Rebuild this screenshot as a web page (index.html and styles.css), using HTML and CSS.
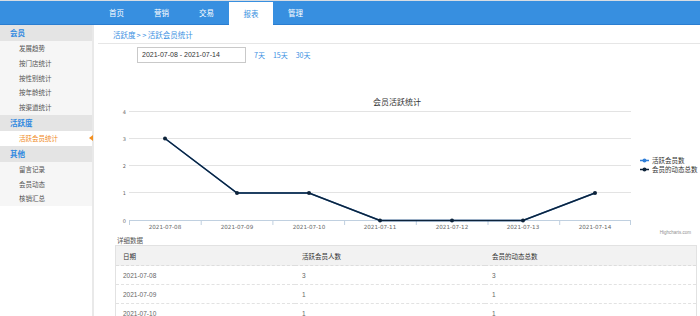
FILE: index.html
```html
<!DOCTYPE html>
<html>
<head>
    <title>会员活跃统计</title>
    <link rel="stylesheet" href="styles.css">
</head>
<body>
    <div class="topbar">
        <ul class="nav">
            <li>首页</li>
            <li>营销</li>
            <li>交易</li>
            <li class="active">报表</li>
            <li>管理</li>
        </ul>
    </div>

    <div class="layout">
        <div class="sidebar">
            <div class="menu">
                <div class="menu-title">会员</div>
                <div class="menu-item">发展趋势</div>
                <div class="menu-item">按门店统计</div>
                <div class="menu-item">按性别统计</div>
                <div class="menu-item">按年龄统计</div>
                <div class="menu-item">按渠道统计</div>
                <div class="menu-title">活跃度</div>
                <div class="menu-item current">活跃会员统计</div>
                <div class="menu-title">其他</div>
                <div class="menu-item">留言记录</div>
                <div class="menu-item">会员动态</div>
                <div class="menu-item">核销汇总</div>
            </div>
        </div>

        <div class="main">
            <div class="crumb">活跃度<span class="sep">&gt;&gt;</span>活跃会员统计</div>

            <div class="filter">
                <div class="date-input">2021-07-08 - 2021-07-14</div>
                <a class="quick">7天</a>
                <a class="quick">15天</a>
                <a class="quick">30天</a>
            </div>

            <svg class="chart" width="605" height="170" viewBox="95 66 605 170">
                <text class="chart-title" x="398" y="105" text-anchor="middle">会员活跃统计</text>

                <!-- 网格线 -->
                <g stroke="#e3e3e3" stroke-width="1">
                    <line x1="130" y1="111.5" x2="632" y2="111.5"/>
                    <line x1="130" y1="138.5" x2="632" y2="138.5"/>
                    <line x1="130" y1="165.5" x2="632" y2="165.5"/>
                    <line x1="130" y1="192.5" x2="632" y2="192.5"/>
                </g>
                <line x1="130" y1="220.5" x2="632" y2="220.5" stroke="#c0d0e0"/>
                <g stroke="#c0d0e0">
                    <line x1="130.5" y1="220" x2="130.5" y2="225"/>
                    <line x1="202.2" y1="220" x2="202.2" y2="225"/>
                    <line x1="273.9" y1="220" x2="273.9" y2="225"/>
                    <line x1="345.6" y1="220" x2="345.6" y2="225"/>
                    <line x1="417.3" y1="220" x2="417.3" y2="225"/>
                    <line x1="489" y1="220" x2="489" y2="225"/>
                    <line x1="560.7" y1="220" x2="560.7" y2="225"/>
                    <line x1="631.5" y1="220" x2="631.5" y2="225"/>
                </g>

                <g class="axis-label" text-anchor="end">
                    <text x="127" y="113.5">4</text>
                    <text x="127" y="140.5">3</text>
                    <text x="127" y="167.5">2</text>
                    <text x="127" y="195">1</text>
                    <text x="127" y="222.5">0</text>
                </g>
                <g class="axis-label date-label" text-anchor="middle">
                    <text x="166" y="228.5">2021-07-08</text>
                    <text x="238" y="228.5">2021-07-09</text>
                    <text x="310" y="228.5">2021-07-10</text>
                    <text x="381" y="228.5">2021-07-11</text>
                    <text x="453" y="228.5">2021-07-12</text>
                    <text x="524" y="228.5">2021-07-13</text>
                    <text x="596" y="228.5">2021-07-14</text>
                </g>

                <!-- 活跃会员数 -->
                <polyline fill="none" stroke="#2f7ed8" stroke-width="1.5"
                    points="166,138.5 238,193 310,193 381,220.5 453,220.5 524,220.5 596,193"/>
                <!-- 会员的动态总数 -->
                <polyline fill="none" stroke="#0d233a" stroke-width="1.5"
                    points="166,138.5 238,193 310,193 381,220.5 453,220.5 524,220.5 596,193"/>
                <g fill="#0d233a">
                    <circle cx="166" cy="138.5" r="2"/>
                    <circle cx="238" cy="193" r="2"/>
                    <circle cx="310" cy="193" r="2"/>
                    <circle cx="381" cy="220.5" r="2"/>
                    <circle cx="453" cy="220.5" r="2"/>
                    <circle cx="524" cy="220.5" r="2"/>
                    <circle cx="596" cy="193" r="2"/>
                </g>

                <!-- 图例 -->
                <line x1="641" y1="160.5" x2="650" y2="160.5" stroke="#2f7ed8" stroke-width="1.5"/>
                <circle cx="645.5" cy="160.5" r="2" fill="#2f7ed8"/>
                <text class="legend" x="653" y="162.5">活跃会员数</text>
                <line x1="641" y1="169.5" x2="650" y2="169.5" stroke="#0d233a" stroke-width="1.5"/>
                <circle cx="645.5" cy="169.5" r="2" fill="#0d233a"/>
                <text class="legend" x="653" y="171.5">会员的动态总数</text>

                <text class="credits" x="692" y="234" text-anchor="end">Highcharts.com</text>
            </svg>

            <div class="detail-title">详细数据</div>
            <table class="data-table">
                <thead>
                    <tr>
                        <th class="col-date">日期</th>
                        <th class="col-active">活跃会员人数</th>
                        <th>会员的动态总数</th>
                    </tr>
                </thead>
                <tbody>
                    <tr><td>2021-07-08</td><td>3</td><td>3</td></tr>
                    <tr><td>2021-07-09</td><td>1</td><td>1</td></tr>
                    <tr><td>2021-07-10</td><td>1</td><td>1</td></tr>
                </tbody>
            </table>
        </div>
    </div>
</body>
</html>
```

FILE: styles.css
```css
body {
    margin: 0;
    font-family: "Noto Sans CJK SC", "Liberation Sans", sans-serif;
    color: #333;
    height: 316px;
    overflow: hidden;
}
.topbar {
    height: 23px;
    background: #378fe0;
    border-top: 1px solid #d8dde3;
    border-bottom: 1px solid #2a7dd0;
}
.nav {
    list-style: none;
    margin: 0 0 0 94px;
    padding: 0;
    display: flex;
}
.nav li {
    width: 45px;
    height: 23px;
    line-height: 23px;
    text-align: center;
    font-size: 7.5px;
    color: #fff;
}
.nav li.active {
    background: #fff;
    color: #378fe0;
    height: 25px;
    margin-top: 1px;
    width: 44px;
}

.layout {
    display: flex;
    height: 291px;
}
.sidebar {
    width: 92px;
    border-right: 2px solid #e9e9e9;
    background: #fff;
}
.menu {
    background: #f6f6f6;
}
.menu-title {
    height: 16px;
    line-height: 16px;
    padding-left: 10px;
    background: #e4e4e4;
    color: #2f88e0;
    font-size: 7.5px;
    font-weight: bold;
}
.menu-item {
    height: 14.8px;
    line-height: 14.8px;
    padding-left: 19px;
    font-size: 6.5px;
    color: #555;
}
.menu-item.current {
    position: relative;
    background: #fff;
    color: #f08a24;
}
.menu-item.current::after {
    content: "";
    position: absolute;
    right: -1px;
    top: 4px;
    border-style: solid;
    border-width: 3.5px 4px 3.5px 0;
    border-color: transparent #f39020 transparent transparent;
}

.main {
    flex: 1;
    padding-left: 1px;
}
.crumb {
    height: 18px;
    line-height: 19px;
    margin-left: 3px;
    padding-left: 15px;
    border-bottom: 1px solid #e6e6e6;
    color: #3a8fe2;
    font-size: 7.5px;
}
.crumb .sep {
    letter-spacing: 1.5px;
    margin-left: 1px;
}
.filter {
    display: flex;
    align-items: center;
    height: 22px;
    padding-left: 42px;
}
.date-input {
    width: 103px;
    height: 14px;
    line-height: 14px;
    padding-left: 4px;
    border: 1px solid #c9c9c9;
    font-family: "Liberation Sans", sans-serif;
    font-size: 7px;
    color: #333;
}
.quick {
    margin-left: 8px;
    font-size: 7px;
    color: #3a8fe2;
}

.chart {
    display: block;
    margin-left: -1px;
}
.chart-title {
    font-size: 8px;
    fill: #333;
}
.axis-label {
    font-family: "DejaVu Sans", sans-serif;
    font-size: 5px;
    fill: #666;
}
.date-label {
    font-size: 5.6px;
}
.legend {
    font-size: 6.5px;
    fill: #333;
}
.credits {
    font-family: "Liberation Sans", sans-serif;
    font-size: 4.5px;
    fill: #909090;
}

.detail-title {
    height: 9px;
    line-height: 9px;
    padding-left: 22px;
    font-size: 6.5px;
    color: #555;
}
.data-table {
    margin-left: 20px;
    width: 582px;
    border-collapse: collapse;
    border: 1px solid #e2e2e2;
    font-size: 6.5px;
    color: #666;
}
.data-table th {
    background: #f2f2f2;
    height: 19px;
    padding: 0 0 0 7px;
    text-align: left;
    font-weight: normal;
    color: #333;
    border-bottom: 1px dashed #ddd;
}
.data-table td {
    height: 18px;
    padding: 0 0 0 7px;
    border-bottom: 1px dashed #e2e2e2;
    font-family: "Liberation Sans", sans-serif;
}
.col-date {
    width: 172px;
}
.col-active {
    width: 183px;
}
```
